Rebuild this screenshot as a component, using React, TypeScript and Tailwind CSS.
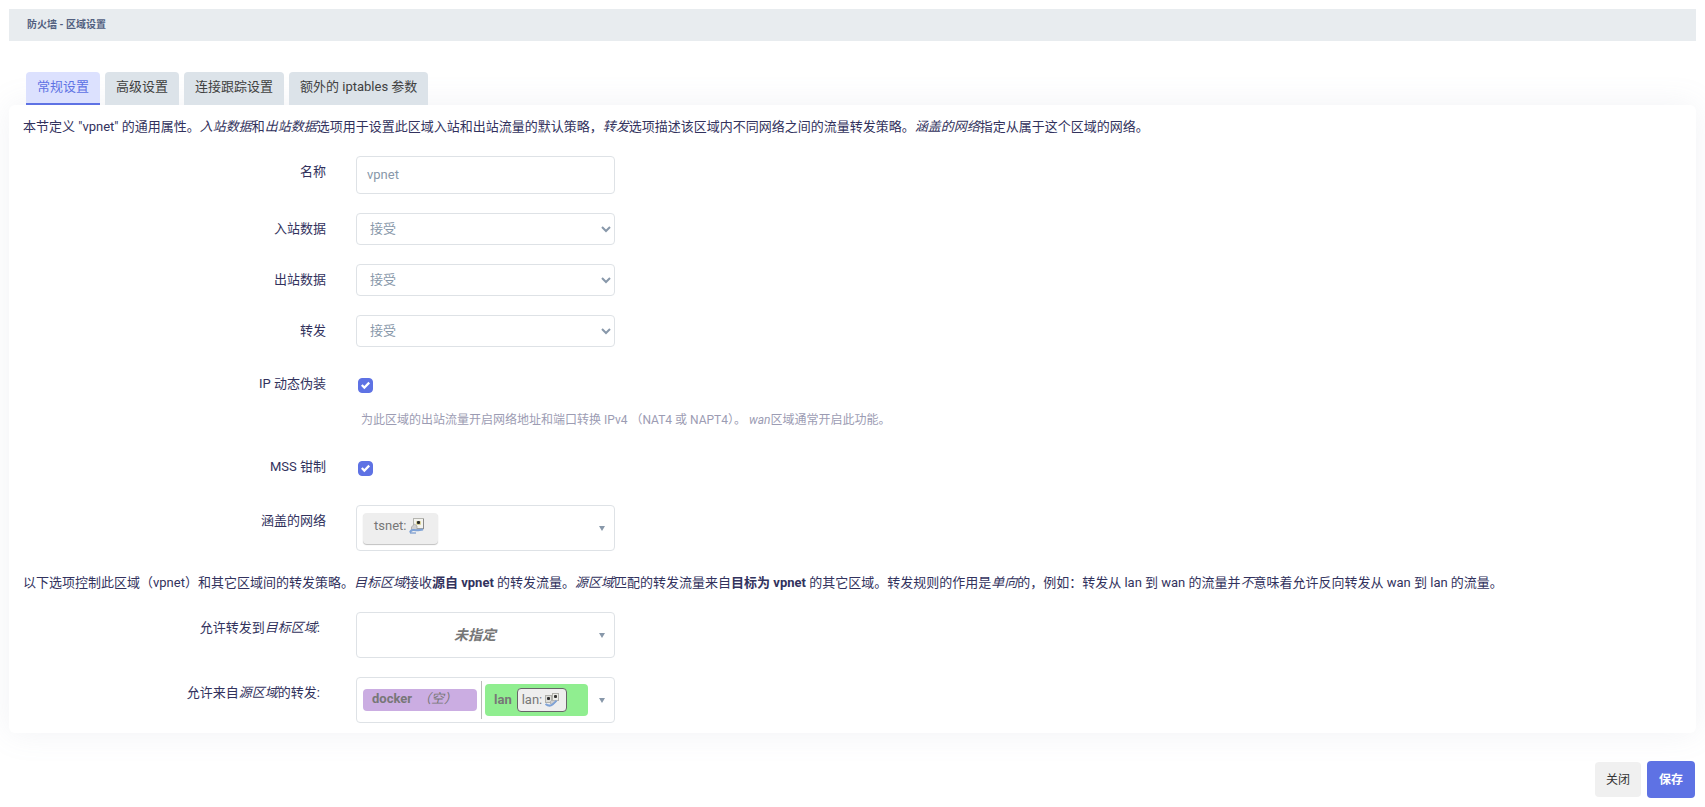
import React, { useState } from 'react';
import clsx from 'clsx';

const tabs = ['常规设置', '高级设置', '连接跟踪设置', '额外的 iptables 参数'];

const policies = [
  { id: 'input', label: '入站数据' },
  { id: 'output', label: '出站数据' },
  { id: 'forward', label: '转发' },
];

const TunnelIcon = () => (
  <svg width="16" height="16" viewBox="0 0 16 16" aria-hidden="true">
    <rect x="4.5" y="0.5" width="10" height="10" fill="#f4f4ef" stroke="#b5b5b0" />
    <path d="M14.5 1v10H6" fill="none" stroke="#8a8a8a" />
    <rect x="7" y="3" width="5" height="4" rx="1" fill="#d9d29a" />
    <rect x="8" y="3" width="3" height="3" rx="1" fill="#2a2a2a" />
    <path d="M2.500 12.500V9l3-3 2.500 2v4z" fill="#cfcfcf" stroke="#a5a5a5" strokeWidth="0.800" />
    <path d="M1 14.500q1-3 4-2.500t4 .3 5-.8" fill="none" stroke="#7ea2d6" strokeWidth="2" />
    <path d="M1 15h6" stroke="#5c86c6" />
  </svg>
);

const BridgeIcon = () => (
  <svg width="16" height="16" viewBox="0 0 16 16" aria-hidden="true">
    <rect x="1.500" y="3.500" width="6" height="7" fill="#dcdcd8" stroke="#b0b0ab" />
    <rect x="3" y="5" width="3" height="3" rx="1" fill="#333" />
    <rect x="8.500" y="1.500" width="6" height="7" fill="#ecece8" stroke="#b0b0ab" />
    <rect x="10" y="3" width="3" height="3" rx="1" fill="#333" />
    <path d="M6.500 9v3h3l4-3.500" fill="#cfcfcf" stroke="#b0b0b0" strokeWidth="0.800" />
    <path d="M1.500 12q4 3 7 .5t4-4" fill="none" stroke="#7ea2d6" strokeWidth="2" />
  </svg>
);

const Row = ({
  id,
  label,
  indent,
  children,
}: {
  id: string;
  label: React.ReactNode;
  indent?: boolean;
  children: React.ReactNode;
}) => (
  <div className="flex items-start">
    <label
      htmlFor={id}
      className={clsx('w-[317px] shrink-0 pt-1.5 text-right', indent && 'pr-1.5')}
    >
      {label}
    </label>
    <div className="ml-[30px]">{children}</div>
  </div>
);

const CheckRow = ({ id, label, help }: { id: string; label: string; help?: React.ReactNode }) => {
  const [checked, setChecked] = useState(true);
  return (
    <div className="min-h-[37px] pt-0.5">
      <Row id={id} label={label}>
        <div className="relative mt-2.5 ml-0.5 h-[15px] w-[15px]">
          <input
            id={id}
            type="checkbox"
            checked={checked}
            onChange={(e) => setChecked(e.target.checked)}
            className="block h-[15px] w-[15px] appearance-none rounded border border-[#5e72e4] checked:bg-[#5e72e4]"
          />
          {checked && (
            <svg
              viewBox="0 0 8 8"
              className="pointer-events-none absolute top-[3px] left-[3px] h-[9px] w-[9px]"
              aria-hidden="true"
            >
              <path
                fill="#fff"
                d="M6.564.75l-3.590 3.612-1.538-1.550L0 4.260 2.974 7.250 8 2.193z"
              />
            </svg>
          )}
        </div>
        {help && <p className="mt-[17px] ml-[5px] text-[12px] leading-5 text-[#9c9cb3]">{help}</p>}
      </Row>
    </div>
  );
};

const Dropdown = ({ id, children }: { id: string; children: React.ReactNode }) => (
  <button
    id={id}
    type="button"
    aria-haspopup="listbox"
    className="flex h-[46px] w-[259px] items-center rounded border border-[#dee2e6] bg-white pr-[9px] pl-1.5 text-left text-[#777]"
  >
    <span className="flex flex-1 items-center">{children}</span>
    <svg width="6" height="5" viewBox="0 0 6 5" aria-hidden="true">
      <path d="M0 0h6L3 5z" fill="#8898aa" />
    </svg>
  </button>
);

const App = () => {
  const [active, setActive] = useState(0);
  const [name, setName] = useState('vpnet');

  return (
    <div className="bg-white px-[9px] pt-[9px] pb-[9px] font-[Roboto,'Noto_Sans_CJK_SC',sans-serif] text-[13px] leading-5 text-[#32325d]">
      <h4 className="bg-[#e8ecef] px-[18px] py-1.5 text-[10px] leading-5 font-bold text-[#525f7f]">
        防火墙 - 区域设置
      </h4>

      <div role="tablist" className="mt-[31px] ml-[17px] flex gap-[5px]">
        {tabs.map((tab, i) => (
          <button
            key={tab}
            type="button"
            role="tab"
            aria-selected={active === i}
            onClick={() => setActive(i)}
            className={clsx(
              'h-[33px] rounded-t border-b-2 px-[11px] pb-0.5',
              active === i
                ? 'border-[#5e72e4] bg-[#dce1fe] text-[#5e72e4]'
                : 'border-[#dce3e9] bg-[#dce3e9] text-[#404040]'
            )}
          >
            {tab}
          </button>
        ))}
      </div>

      <section className="flex flex-col gap-[19px] rounded-md bg-white pt-3 pb-2.5 shadow-[0_0_32px_rgba(136,152,170,0.12)]">
        <p className="px-3.5">
          本节定义 "vpnet" 的通用属性。<em>入站数据</em>和<em>出站数据</em>
          选项用于设置此区域入站和出站流量的默认策略，<em>转发</em>
          选项描述该区域内不同网络之间的流量转发策略。<em>涵盖的网络</em>
          指定从属于这个区域的网络。
        </p>

        <Row id="name" label="名称">
          <input
            id="name"
            type="text"
            value={name}
            onChange={(e) => setName(e.target.value)}
            className="block h-[38px] w-[259px] rounded border border-[#dee2e6] bg-white px-2.5 pb-0.5 text-[#8898aa]"
          />
        </Row>

        {policies.map((policy) => (
          <Row key={policy.id} id={policy.id} label={policy.label}>
            <select
              id={policy.id}
              defaultValue="ACCEPT"
              className="block h-8 w-[259px] rounded border border-[#dee2e6] bg-white pb-0.5 pl-[9px] text-[#8898aa]"
            >
              <option value="REJECT">拒绝</option>
              <option value="DROP">丢弃</option>
              <option value="ACCEPT">接受</option>
            </select>
          </Row>
        ))}

        <CheckRow
          id="masq"
          label="IP 动态伪装"
          help={
            <>
              为此区域的出站流量开启网络地址和端口转换 IPv4 （NAT4 或 NAPT4）。 <em>wan</em>
              区域通常开启此功能。
            </>
          }
        />
        <CheckRow id="mtu_fix" label="MSS 钳制" />

        <Row id="network" label="涵盖的网络">
          <Dropdown id="network">
            <span className="flex h-[31px] w-[75px] items-center gap-[3px] rounded bg-[#eee] px-[11px] pb-1 shadow-[0_1px_1px_rgba(0,0,0,0.25)]">
              tsnet: <TunnelIcon />
            </span>
          </Dropdown>
        </Row>

        <p className="px-3.5 pt-[3px]">
          以下选项控制此区域（vpnet）和其它区域间的转发策略。<em>目标区域</em>接收
          <strong>源自 vpnet</strong> 的转发流量。<em>源区域</em>匹配的转发流量来自
          <strong>目标为 vpnet</strong> 的其它区域。转发规则的作用是<em>单向</em>
          的，例如：转发从 lan 到 wan 的流量并<em>不</em>意味着允许反向转发从 wan 到 lan 的流量。
        </p>

        <Row id="out" indent label={<>允许转发到<em>目标区域</em>:</>}>
          <Dropdown id="out">
            <em className="flex-1 pr-3 text-center text-[14px] font-bold">未指定</em>
          </Dropdown>
        </Row>

        <Row id="in" indent label={<>允许来自<em>源区域</em>的转发:</>}>
          <Dropdown id="in">
            <span className="flex h-[22px] w-[114px] items-center gap-1.5 rounded bg-[#cbade2] px-[9px] pb-0.5">
              <strong>docker</strong>
              <em>（空）</em>
            </span>
            <span className="ml-1 h-[38px] w-px bg-[#bbb]" />
            <span className="ml-[3px] flex h-8 w-[103px] items-center gap-[5px] rounded bg-[#90ee90] px-[9px]">
              <strong>lan</strong>
              <span className="flex h-6 w-[50px] items-center gap-0.5 rounded border border-[#666] bg-[#eee] px-1">
                lan: <BridgeIcon />
              </span>
            </span>
          </Dropdown>
        </Row>
      </section>

      <div className="mt-7 flex items-center justify-end gap-1.5 pr-px text-[12px]">
        <button type="button" className="h-[35px] rounded bg-[#f0f0f0] px-[11px] text-[#333]">
          关闭
        </button>
        <button type="button" className="h-[37px] rounded bg-[#5e72e4] px-3 font-bold text-white">
          保存
        </button>
      </div>
    </div>
  );
};

export default App;
